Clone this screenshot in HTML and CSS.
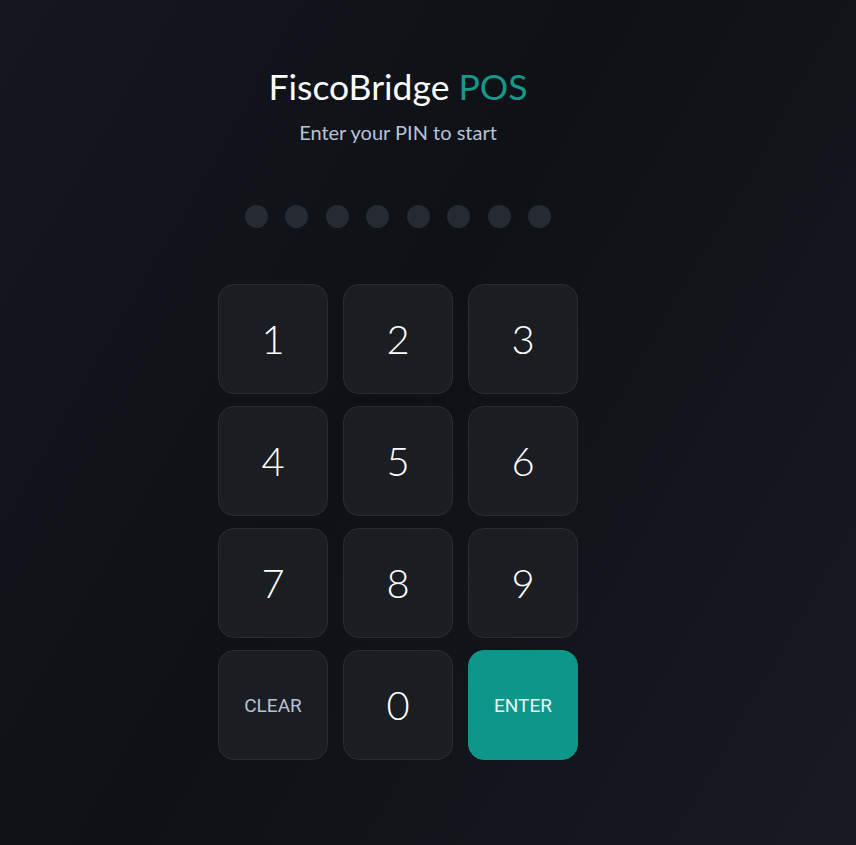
FILE: index.html
```html
<!DOCTYPE html>
<html lang="en">
<head>
    <meta charset="UTF-8">
    <meta name="viewport" content="width=device-width, initial-scale=1.0">
    <title>FiscoBridge POS</title>
    <link rel="stylesheet" href="styles.css">
</head>
<body>
    <div class="login">
        <!-- Header -->
        <h1 class="brand">FiscoBridge <span class="brand-accent">POS</span></h1>
        <p class="hint">Enter your PIN to start</p>

        <!-- PIN indicator -->
        <div class="pin-dots">
            <span class="dot"></span>
            <span class="dot"></span>
            <span class="dot"></span>
            <span class="dot"></span>
            <span class="dot"></span>
            <span class="dot"></span>
            <span class="dot"></span>
            <span class="dot"></span>
        </div>

        <!-- Keypad -->
        <div class="keypad">
            <button class="key">1</button>
            <button class="key">2</button>
            <button class="key">3</button>
            <button class="key">4</button>
            <button class="key">5</button>
            <button class="key">6</button>
            <button class="key">7</button>
            <button class="key">8</button>
            <button class="key">9</button>
            <button class="key key-text">CLEAR</button>
            <button class="key">0</button>
            <button class="key key-text key-enter">ENTER</button>
        </div>
    </div>
</body>
</html>
```

FILE: styles.css
```css
html, body {
    height: 100%;
}
body {
    margin: 0;
    font-family: Lato, "Open Sans", sans-serif;
    background: linear-gradient(120deg, #14171d 0%, #0e1116 45%, #171a20 100%);
    color: #ffffff;
}
.login {
    display: flex;
    flex-direction: column;
    align-items: center;
    padding: 63px 60px 0 0;
}
.brand {
    margin: 0;
    font-size: 35.5px;
    font-weight: 400;
    line-height: 48px;
}
.brand-accent {
    color: #14998a;
}
.hint {
    margin: 8px 0 0;
    font-size: 20px;
    line-height: 26px;
    color: #b7c2d6;
}
.pin-dots {
    display: flex;
    gap: 17.5px;
    margin-top: 60px;
}
.dot {
    width: 23px;
    height: 23px;
    border-radius: 50%;
    background-color: #262a31;
}
.keypad {
    display: grid;
    grid-template-columns: repeat(3, 110px);
    grid-auto-rows: 110px;
    gap: 12px 15px;
    margin-top: 56px;
}
.key {
    display: flex;
    align-items: center;
    justify-content: center;
    border: 1px solid #2a2d33;
    border-radius: 16px;
    background: linear-gradient(135deg, #1a1d22 0%, #1b1e23 100%);
    color: #ffffff;
    font-family: Lato, "Open Sans", sans-serif;
    font-size: 40px;
    font-weight: 300;
    cursor: pointer;
    padding: 0;
}
.key:hover {
    background: #22262c;
}
.key-text {
    font-family: Roboto, sans-serif;
    font-size: 19px;
    font-weight: 400;
    color: #b7c2d6;
}
.key-enter {
    background: #0d978a;
    border-color: #0d978a;
    color: #e8f5f3;
}
.key-enter:hover {
    background: #0f8a7e;
}
```
